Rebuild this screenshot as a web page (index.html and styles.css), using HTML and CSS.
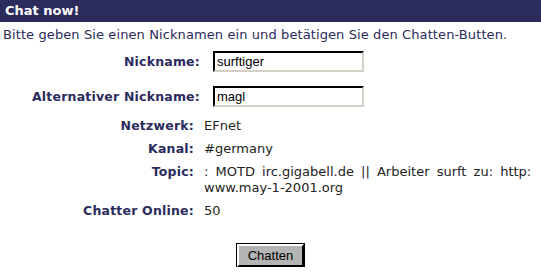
FILE: index.html
```html
<!DOCTYPE html>
<html lang="de">
<head>
    <meta charset="UTF-8">
    <title>Chat now!</title>
    <link rel="stylesheet" href="styles.css">
</head>
<body>
    <div class="titlebar">Chat now!</div>
    <p class="intro">Bitte geben Sie einen Nicknamen ein und betätigen Sie den Chatten-Butten.</p>

    <form class="chatform" onsubmit="return false;">
        <div class="grid">
            <label class="lbl field" for="nick">Nickname:</label>
            <div class="field"><input id="nick" type="text" value="surftiger"></div>

            <label class="lbl field" for="alt">Alternativer Nickname:</label>
            <div class="field"><input id="alt" type="text" value="magl"></div>

            <div class="lbl">Netzwerk:</div>
            <div class="val">EFnet</div>

            <div class="lbl">Kanal:</div>
            <div class="val">#germany</div>

            <div class="lbl">Topic:</div>
            <div class="val topic">: MOTD irc.gigabell.de || Arbeiter surft zu: http:<br>www.may-1-2001.org</div>

            <div class="lbl">Chatter Online:</div>
            <div class="val">50</div>
        </div>
        <div class="actions">
            <button type="submit">Chatten</button>
        </div>
    </form>
</body>
</html>
```

FILE: styles.css
```css
body { margin: 0; font-family: "DejaVu Sans", Verdana, sans-serif; font-size: 13px; color: #2b2b5c; background: #fff; }
.titlebar { height: 22px; line-height: 22px; padding-left: 5px; background-color: #2b2b5c; color: #fff; font-weight: bold; font-size: 13px; }
.intro { margin: 5px 0 5px 3px; line-height: 16px; letter-spacing: 0.1px; }
.grid { display: grid; grid-template-columns: 200px 1fr; column-gap: 4px; row-gap: 7px; }
.lbl { text-align: right; font-weight: bold; line-height: 16px; padding-right: 6px; color: #2b2b5c; font-size: 12.5px; letter-spacing: 0.2px; }
.lbl.field { line-height: 28px; padding-right: 0; }
.field input { margin: 3px 0 0 9px; width: 151px; height: 21px; box-sizing: border-box; padding: 1px 2px; border: 2px inset #d4d0c8; border-top-color: #404040; border-left-color: #404040; border-right-color: #d4d0c8; border-bottom-color: #d4d0c8; font-family: "Liberation Sans", Arial, sans-serif; font-size: 13px; color: #000; background: #fff; }
.val { line-height: 16px; color: #222; white-space: nowrap; }
.topic { word-spacing: 3px; }
.actions { text-align: center; margin-top: 25px; }
button { width: 67px; height: 23px; padding: 0; font-family: "Liberation Sans", Arial, sans-serif; font-size: 13px; color: #000; background-color: #b4b4b4; border: 2px solid; border-color: #fff #000 #000 #fff; box-shadow: 0 0 0 1px #000; cursor: pointer; }
```
